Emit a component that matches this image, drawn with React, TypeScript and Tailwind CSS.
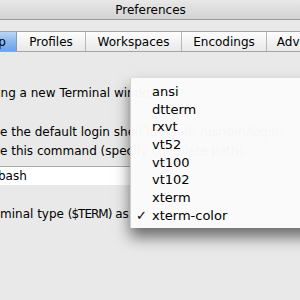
const menuItems = ["ansi", "dtterm", "rxvt", "vt52", "vt100", "vt102", "xterm", "xterm-color"]

const tabs = [
  { label: "Profiles", w: "w-[69px]" },
  { label: "Workspaces", w: "w-[96px]" },
  { label: "Encodings", w: "w-[85px]" },
  { label: "Advanced", w: "w-[80px]" },
]

const App = () => {
  return (
    <div
      className="relative w-[300px] h-[300px] overflow-hidden bg-[#e9e9e9] text-[12px] text-black"
      style={{ fontFamily: '"DejaVu Sans", "Liberation Sans", sans-serif' }}
    >
      {/* Title bar */}
      <div className="h-[20px] bg-gradient-to-b from-[#e8e8e8] to-[#d3d3d3] border-b border-[#9a9a9a] flex items-center justify-center">
        <span className="pl-[1px]">Preferences</span>
      </div>

      {/* Tabs */}
      <div className="pt-[11px]">
        <div className="flex h-[21px] border-y border-[#a4a4a4] bg-gradient-to-b from-[#fdfdfd] to-[#e9e9e9] whitespace-nowrap">
          <div className="w-[17px] shrink-0 overflow-hidden flex justify-end items-center pr-[10px] bg-gradient-to-b from-[#bcd6f6] via-[#8cb8ef] to-[#6aa3ea] border-r border-[#8a9ab0]">
            <span>Startup</span>
          </div>
          {tabs.map((t) => (
            <div
              key={t.label}
              className={`${t.w} shrink-0 flex items-center justify-center border-r border-[#b8b8b8]`}
            >
              {t.label}
            </div>
          ))}
        </div>
      </div>

      {/* Content, left side of the window is cut off */}
      <div className="pt-[31px] whitespace-nowrap">
        <div className="h-[20px] leading-[20px] -ml-[71px]">When opening a new Terminal window:</div>
        <div className="h-[20px]"></div>
        <div className="h-[19px] leading-[19px]">e the default login shell (default: /usr/bin/login)</div>
        <div className="h-[19px] leading-[19px]">e this command (specify complete path):</div>
        <div className="mt-[5px] h-[19px] bg-white border-t border-[#a9a9a9] leading-[19px] -ml-[2px]">
          bash
        </div>
        <div className="mt-[19px] h-[20px] leading-[20px]">
          minal type <span className="tracking-[-1px]">($TERM)</span> as:
        </div>
      </div>

      {/* Popup menu */}
      <div className="absolute left-[130px] top-[78px] w-[190px] h-[150px] bg-[#fafafa]/[0.98] border-l border-[#d0d0d0] shadow-[0_9px_14px_rgba(0,0,0,0.55)] pt-[5px] text-[13px]">
        {menuItems.map((item) => (
          <div key={item} className="relative h-[17.7px] leading-[17.7px] pl-[21px]">
            {item === "xterm-color" && (
              <span className="absolute left-[5px] top-0">✓</span>
            )}
            {item}
          </div>
        ))}
      </div>
    </div>
  )
}

export default App
